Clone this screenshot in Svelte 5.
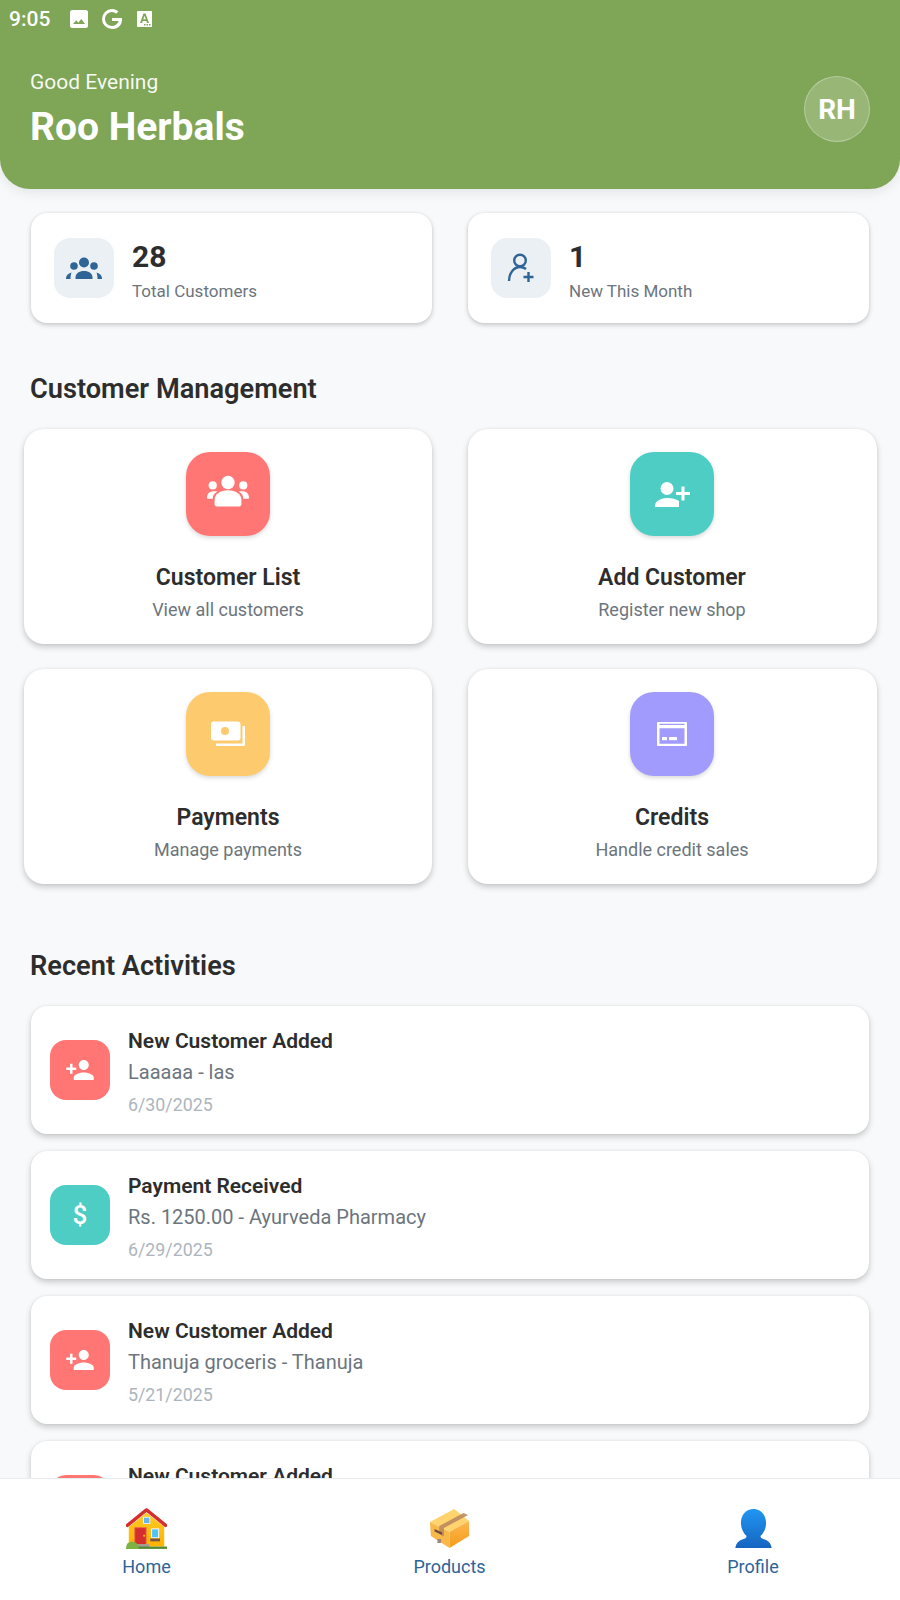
<script>
  const stats = [
    { value: '28', label: 'Total Customers', icon: 'group' },
    { value: '1', label: 'New This Month', icon: 'personAdd' }
  ];
  const actions = [
    { title: 'Customer List', sub: 'View all customers', color: '#ff7675', icon: 'groups' },
    { title: 'Add Customer', sub: 'Register new shop', color: '#4ecdc4', icon: 'add' },
    { title: 'Payments', sub: 'Manage payments', color: '#fdcb6e', icon: 'money' },
    { title: 'Credits', sub: 'Handle credit sales', color: '#a29bfe', icon: 'card' }
  ];
  const activities = [
    { title: 'New Customer Added', sub: 'Laaaaa - las', date: '6/30/2025', color: '#ff7675', icon: 'person' },
    { title: 'Payment Received', sub: 'Rs. 1250.00 - Ayurveda Pharmacy', date: '6/29/2025', color: '#4ecdc4', icon: 'dollar' },
    { title: 'New Customer Added', sub: 'Thanuja groceris - Thanuja', date: '5/21/2025', color: '#ff7675', icon: 'person' },
    { title: 'New Customer Added', sub: '', date: '', color: '#ff7675', icon: 'person' }
  ];
</script>

{#snippet glyph(name)}
  {#if name === 'group'}
    <svg class="ic36" viewBox="0 0 36 36"><circle cx="18" cy="12.500" r="5"/><circle cx="8" cy="16" r="3.800"/><circle cx="28" cy="16" r="3.800"/><path d="M9.500 29v-1.500c0-4 3.500-6.500 8.500-6.500s8.500 2.500 8.500 6.500V29z"/><path d="M0 29v-.5c0-3 2-5 5.500-6-.6 1.700-1 3.500-1 6.500zM36 29v-.5c0-3-2-5-5.500-6 .6 1.700 1 3.500 1 6.500z"/></svg>
  {:else if name === 'personAdd'}
    <svg class="ic36 line" viewBox="0 0 36 36"><circle cx="17" cy="10.500" r="5.800"/><path d="M6 31c0-8 5-14 11-14 2.500 0 4.500.8 6 2"/><path d="M20.500 27h10M25.500 22v10"/></svg>
  {:else if name === 'groups'}
    <svg class="ic44" viewBox="0 -2 44 44"><circle cx="22" cy="8" r="7"/><circle cx="6" cy="11" r="4.300"/><circle cx="38" cy="11" r="4.300"/><path d="M8 31v-5c0-6 6-10 14-10s14 4 14 10v5c0 1-1 2-2 2H10c-1 0-2-1-2-2z"/><path d="M0 24c0-5 3-7 8-7 1 0 2 0 3 .5-3 1.500-5 4-5 7.500H1c-.6 0-1-.4-1-1zM44 24c0-5-3-7-8-7-1 0-2 0-3 .5 3 1.500 5 4 5 7.500h5c.6 0 1-.4 1-1z"/></svg>
  {:else if name === 'add'}
    <svg class="ic44" viewBox="0 0 42 42"><circle cx="16" cy="15.500" r="6.500"/><path d="M4 34v-1.500c0-5 7-7.500 12.500-7.500 4.500 0 8.500 1 11.500 3v6z"/><path d="M30.500 13.500h3v5.500H39v3h-5.500v5.500h-3V22H25v-3h5.500z"/></svg>
  {:else if name === 'money'}
    <svg class="ic44" viewBox="0 0 42 42"><path fill-rule="evenodd" d="M6.500 8.500H31c1.500 0 2.500 1 2.500 2.500v14c0 1.500-1 2.500-2.500 2.500H6.500C5 27.500 4 26.500 4 25V11c0-1.500 1-2.500 2.500-2.500zM18 14a4 4 0 1 0 0 8 4 4 0 0 0 0-8z"/><path d="M35.500 13H38v18.500c0 1-.5 1.500-1.500 1.500H9v-2.500h26.500z"/></svg>
  {:else if name === 'card'}
    <svg class="ic44" viewBox="0 0 42 42"><path fill-rule="evenodd" d="M7 9h28c.6 0 1 .4 1 1v22c0 .6-.4 1-1 1H7c-.6 0-1-.4-1-1V10c0-.6.4-1 1-1zm1.500 1.800v1.200h25v-1.200zm0 4.500v15.500h25V15.300z"/><rect x="11" y="24" width="5" height="3.200"/><rect x="18" y="24" width="8" height="3.200"/></svg>
  {:else if name === 'person'}
    <svg class="ic30" viewBox="0 0 24 24"><path d="M15 12c2.210 0 4-1.790 4-4s-1.790-4-4-4-4 1.790-4 4 1.790 4 4 4zm-9-2V7H4v3H1v2h3v3h2v-3h3v-2H6zm9 4c-2.670 0-8 1.340-8 4v2h16v-2c0-2.660-5.330-4-8-4z"/></svg>
  {:else}
    <span class="dollar">$</span>
  {/if}
{/snippet}

<div class="app">
  <header class="hero">
    <div class="status">
      <span class="time">9:05</span>
      <svg class="s-img" viewBox="0 0 18 18"><path fill-rule="evenodd" d="M2 0h14c1 0 2 1 2 2v14c0 1-1 2-2 2H2c-1 0-2-1-2-2V2c0-1 1-2 2-2zm1 14h12l-3.700-5-3 3.800-2-2.500z"/></svg>
      <svg class="s-g" viewBox="0 0 20 20"><path d="M10 0c2.700 0 4.800 1 6.400 2.500l-2.300 2.300C13 3.700 11.700 3 10 3a7 7 0 1 0 6.700 9H10V9h10c.6 6.500-3.500 11-10 11A10 10 0 0 1 10 0z"/></svg>
      <svg class="s-a" viewBox="0 0 15 16"><path fill-rule="evenodd" d="M1 0h13c.6 0 1 .4 1 1v14c0 .6-.4 1-1 1H1c-.6 0-1-.4-1-1V1c0-.6.4-1 1-1zm5.500 2.500L3 12h2l.7-2h3.600l.7 2h2L8.500 2.500zM7.500 4.800 8.700 8.300H6.300zM7 13h1.500v1.500H7zm2.500 0H11v1.500H9.500zm2.500 0h1.500v1.500H12z"/></svg>
    </div>
    <div class="hero-row">
      <div>
        <div class="greet">Good Evening</div>
        <div class="brand">Roo Herbals</div>
      </div>
      <div class="avatar">RH</div>
    </div>
  </header>

  <main class="content">
    <section class="stats">
      {#each stats as s}
        <div class="stat card">
          <div class="stat-ic">{@render glyph(s.icon)}</div>
          <div class="stat-tx">
            <div class="stat-val">{s.value}</div>
            <div class="stat-lab">{s.label}</div>
          </div>
        </div>
      {/each}
    </section>

    <h2 class="sec sec1">Customer Management</h2>
    <section class="actions">
      {#each actions as a}
        <div class="action card">
          <div class="act-ic" style="background:{a.color}">{@render glyph(a.icon)}</div>
          <div class="act-t">{a.title}</div>
          <div class="act-s">{a.sub}</div>
        </div>
      {/each}
    </section>

    <h2 class="sec sec2">Recent Activities</h2>
    <section class="list">
      {#each activities as a}
        <div class="row card">
          <div class="row-ic" style="background:{a.color}">{@render glyph(a.icon)}</div>
          <div class="row-tx">
            <div class="row-t">{a.title}</div>
            {#if a.sub}<div class="row-s">{a.sub}</div>{/if}
            {#if a.date}<div class="row-d">{a.date}</div>{/if}
          </div>
        </div>
      {/each}
    </section>
  </main>

  <nav class="nav">
    <div class="tab">
      <svg class="emoji" viewBox="0 0 44 44" preserveAspectRatio="none">
        <defs>
          <linearGradient id="wall" x1="0" y1="0" x2="0" y2="1"><stop offset="0" stop-color="#ffca28"/><stop offset="1" stop-color="#ffb300"/></linearGradient>
        </defs>
        <g transform="translate(0 1) scale(1 .94)">
          <path d="M3 20 22 5l19 15v21H3z" fill="url(#wall)"/>
          <path d="M1.500 18.500 22 2l20.500 16.500" fill="none" stroke="#d32f2f" stroke-width="3.600" stroke-linejoin="round" stroke-linecap="round"/>
          <rect x="18.500" y="9.400" width="7.500" height="7.600" fill="#fff"/><rect x="19.300" y="10.200" width="5.900" height="6" fill="#64b5f6"/>
          <rect x="9" y="20.500" width="13" height="18" fill="#ef5350"/><rect x="10" y="21.500" width="11" height="17" fill="#d32f2f"/>
          <rect x="18.500" y="28.500" width="2" height="2" fill="#ffb300"/>
          <rect x="27" y="21.700" width="8.500" height="10.300" fill="#fff"/><rect x="28" y="22.700" width="6.500" height="8.500" fill="#4fc3f7"/>
          <rect x="26" y="32.500" width="10.500" height="3" fill="#795548"/>
          <rect x="13" y="38.500" width="12" height="3" fill="#9e9e9e"/>
          <rect x="13" y="41" width="31" height="2.500" fill="#558b2f"/>
          <path d="M0 43.500c0-4.500 2-7 5-7.500 3-.5 6 .5 8 3v4.500z" fill="#7cb342"/>
        </g>
      </svg>
      <span>Home</span>
    </div>
    <div class="tab">
      <svg class="emoji" viewBox="0 0 44 44" preserveAspectRatio="none">
        <defs>
          <linearGradient id="bx" x1="0" y1="0" x2="0" y2="1"><stop offset="0" stop-color="#ffb74d"/><stop offset="1" stop-color="#f59b1b"/></linearGradient>
        </defs>
        <path d="M1 15 27 2l16 12-21 11z" fill="#ffd36e"/>
        <path d="M1 15l21 10v16L2 29z" fill="#f9b84a"/>
        <path d="M22 25l21-11v15L22 41z" fill="url(#bx)"/>
        <path d="M37 6 11 19v8l5 2.500V21l26-13z" fill="#bb8a5c" opacity=".9"/>
        <path d="M6 22l8 3.500V28l-8-3.500z" fill="#6d4c41"/><rect x="9" y="32" width="4" height="4" fill="#a1887f"/>
      </svg>
      <span>Products</span>
    </div>
    <div class="tab">
      <svg class="emoji" viewBox="0 0 44 44" preserveAspectRatio="none">
        <defs>
          <linearGradient id="pf" x1="0" y1="0" x2="0" y2="1"><stop offset="0" stop-color="#2196f3"/><stop offset="1" stop-color="#1565c0"/></linearGradient>
        </defs>
        <path d="M22 2c8 0 13.500 6 13.500 14 0 5.500-2.500 10-6 13 0 1.500 1 2.500 3 3 4 1 8 3 9 9h-39c1-6 5-8 9-9 2-.5 3-1.500 3-3-3.500-3-6-7.500-6-13 0-8 5.500-14 13.500-14z" fill="url(#pf)"/>
      </svg>
      <span>Profile</span>
    </div>
  </nav>
</div>

<style>
  :global(body) { margin: 0; background: #f8f9fa; }
  .app {
    width: 900px; height: 1600px; display: flex; flex-direction: column;
    overflow: hidden; background: #f8f9fa; font-family: Roboto, sans-serif; color: #2d2d2d;
  }
  .hero {
    height: 189px; box-sizing: border-box; background: #7fa556;
    border-radius: 0 0 30px 30px; padding: 0 30px; position: relative; z-index: 1;
    box-shadow: 0 4px 12px rgba(0,0,0,.08); flex: none;
  }
  .status { height: 38px; display: flex; align-items: center; margin-left: -21px; color: #fff; }
  .status svg { fill: #fff; }
  .time { font-size: 21px; font-weight: 500; width: 61px; }
  .s-img { width: 18px; height: 18px; }
  .s-g { width: 20px; height: 20px; margin-left: 14px; }
  .s-a { width: 15px; height: 16px; margin-left: 15px; }
  .hero-row { display: flex; justify-content: space-between; align-items: flex-start; margin-top: 31px; }
  .greet { font-size: 21px; line-height: 26px; color: rgba(255,255,255,.95); }
  .brand { font-size: 39px; line-height: 47px; font-weight: 700; color: #fff; margin-top: 9px; }
  .avatar {
    width: 66px; height: 66px; box-sizing: border-box; border-radius: 50%;
    background: rgba(255,255,255,.2); border: 1px solid rgba(255,255,255,.3);
    display: flex; align-items: center; justify-content: center;
    color: #fff; font-size: 28px; font-weight: 700; margin-top: 7px;
  }
  .content { flex: 1; min-height: 0; overflow: hidden; }
  .card { background: #fff; box-shadow: 0 2px 5px rgba(0,0,0,.2), 0 0 2px rgba(0,0,0,.08); }
  .stats { display: grid; grid-template-columns: 401px 401px; column-gap: 36px; padding: 24px 31px 0; }
  .stat { height: 110px; box-sizing: border-box; border-radius: 16px; display: flex; align-items: center; gap: 18px; padding-left: 23px; }
  .stat-ic { width: 60px; height: 60px; border-radius: 16px; background: #ebf0f5; display: flex; align-items: center; justify-content: center; }
  .ic36 { width: 36px; height: 36px; fill: #2e6496; }
  .stat-ic .line { fill: none; stroke: #2e6496; stroke-width: 2.400; }
  .stat-tx { padding-top: 4px; }
  .stat-val { font-size: 30px; line-height: 38px; font-weight: 700; color: #2d2d2d; }
  .stat-lab { font-size: 17px; line-height: 24px; color: #6c757d; margin-top: 3px; }
  .sec { margin: 0; font-size: 27.2px; line-height: 34px; font-weight: 600; color: #2d2d2d; }
  .sec1 { padding: 49px 30px 0; }
  .actions { display: grid; grid-template-columns: 408px 409px; column-gap: 36px; row-gap: 25px; padding: 23px 0 0 24px; }
  .action { height: 215px; box-sizing: border-box; border-radius: 20px; display: flex; flex-direction: column; align-items: center; padding-top: 23px; box-shadow: 0 3px 6px rgba(0,0,0,.2), 0 0 2px rgba(0,0,0,.08); }
  .action:nth-child(even) { padding-right: 1px; }
  .act-ic { width: 84px; height: 84px; border-radius: 24px; display: flex; align-items: center; justify-content: center; box-shadow: 0 2px 4px rgba(0,0,0,.15); }
  .ic44 { width: 42px; height: 42px; fill: #fff; }
  .act-t { font-size: 23px; line-height: 30px; font-weight: 600; margin-top: 27px; color: #2d2d2d; }
  .act-s { font-size: 18px; line-height: 24px; color: #6c757d; margin-top: 5px; }
  .sec2 { padding: 65px 30px 0; }
  .list { display: flex; flex-direction: column; gap: 17px; padding: 23px 31px 0; }
  .row { height: 128px; flex: none; box-sizing: border-box; border-radius: 16px; display: flex; align-items: flex-start; gap: 18px; padding-left: 19px; box-shadow: 0 3px 6px rgba(0,0,0,.2), 0 0 2px rgba(0,0,0,.08); }
  .row-ic { width: 60px; height: 60px; border-radius: 16px; display: flex; align-items: center; justify-content: center; flex: none; margin-top: 34px; }
  .ic30 { width: 30px; height: 30px; fill: #fff; }
  .dollar { color: #fff; font-size: 26px; font-weight: 500; }
  .row-tx { padding-top: 21px; }
  .row-t { font-size: 21px; line-height: 28px; font-weight: 600; color: #2d2d2d; }
  .row-s { font-size: 20px; line-height: 26px; color: #6c757d; margin-top: 4px; }
  .row-d { font-size: 17.8px; line-height: 24px; color: #adb5bd; margin-top: 8px; }
  .nav {
    flex: none; height: 122px; box-sizing: border-box; background: #fff; position: relative; z-index: 2;
    border-top: 1px solid #e9ecef; display: grid; grid-template-columns: 292px 294px 293px; column-gap: 10px; justify-content: center;
  }
  .tab { display: flex; flex-direction: column; align-items: center; padding-top: 28px; color: #2e6496; font-size: 18px; }
  .emoji { width: 41px; height: 44px; display: block; }
  .tab span { margin-top: 4px; line-height: 24px; }
</style>
